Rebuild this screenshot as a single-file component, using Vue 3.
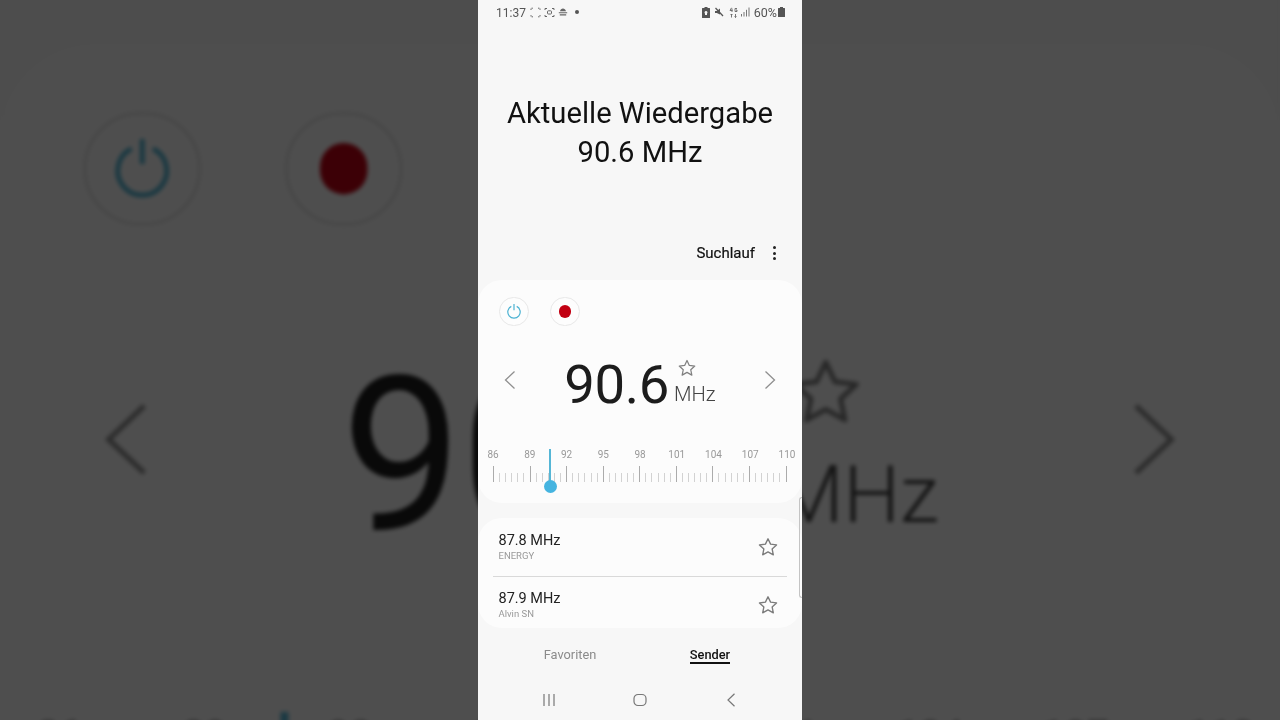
<script setup>
const layers = ['backdrop', 'front']
const labels = [86, 89, 92, 95, 98, 101, 104, 107, 110]
const ticks = Array.from({ length: 49 }, (_, i) => i)
const stations = [
  { freq: '87.8 MHz', name: 'ENERGY' },
  { freq: '87.9 MHz', name: 'Alvin SN' }
]
</script>

<template>
  <div class="stage">
    <div v-for="layer in layers" :key="layer" class="phone" :class="layer">
      <div class="status">
        <span class="time">11:37</span>
        <svg class="si" width="11" height="11" viewBox="0 0 11 11" fill="none" stroke="#666" stroke-width="1">
          <path d="M1 3V1.2H3M8 1.2h2V3M10 8v1.8H8M3 9.8H1V8" stroke-dasharray="1.4 .9" />
        </svg>
        <svg class="si gap3" width="11" height="11" viewBox="0 0 11 11" fill="none" stroke="#666" stroke-width="1">
          <path d="M1 3V1.5H3M8 1.5h2V3M10 8v1.5H8M3 9.5H1V8" />
          <rect x="3.5" y="3.8" width="4" height="3.2" rx=".8" />
        </svg>
        <svg class="si gap3" width="10" height="10" viewBox="0 0 10 10" fill="#666">
          <path d="M2 4.2C2.4 2.4 3.6 1.5 5 1.5c1.300 0 2.500.9 3 2.700zM.8 5.200h8.400v1.100H.8zM1.800 7.300h6.400v1.100H1.800z" />
        </svg>
        <span class="dot"></span>
        <span class="spacer"></span>
        <svg class="si" width="8" height="11" viewBox="0 0 8 11" fill="#555">
          <path d="M2.500 0h3v1H7.500a.5.5 0 0 1 .5.500V10.500a.5.5 0 0 1-.5.500H.5a.5.5 0 0 1-.5-.500V1.500A.5.5 0 0 1 .5 1h2zM4 4a1.500 1.500 0 0 0-1 2.600V8h2V6.600A1.500 1.500 0 0 0 4 4z" />
        </svg>
        <svg class="si gap4" width="10" height="10" viewBox="0 0 10 10" fill="#555">
          <path d="M1 4h1.800L6 1.500v6L2.800 6H1z" />
          <path d="M1.500 1l7.500 8" stroke="#555" stroke-width="1.200" />
        </svg>
        <svg class="si gap5" width="9" height="11" viewBox="0 0 9 11" fill="none" stroke="#666" stroke-width=".9">
          <path d="M2.500 .8L1 3.500h2.500M3 1.500v3.500M8 1.500H6v3h2V3H7" />
          <path d="M2.500 7v3.500M1.500 8l1-1 1 1M6.500 10.500V7M5.500 9.500l1 1 1-1" />
        </svg>
        <svg class="si gap3" width="10" height="10" viewBox="0 0 10 10" fill="#777">
          <rect x="0" y="7" width="1" height="2.500" />
          <rect x="2.500" y="5" width="1" height="4.500" />
          <rect x="5" y="2.800" width="1" height="6.700" />
          <rect x="7.500" y=".5" width="1" height="9" />
        </svg>
        <span class="pct">60%</span>
        <svg class="si" width="7" height="10" viewBox="0 0 7 10" fill="#555">
          <path d="M2 0h3v1h1.500a.5.5 0 0 1 .5.500V9.500a.5.5 0 0 1-.5.500H.5A.5.5 0 0 1 0 9.500V1.500A.5.5 0 0 1 .5 1H2z" />
        </svg>
      </div>

      <div class="hero">
        <div>Aktuelle Wiedergabe</div>
        <div>90.6 MHz</div>
      </div>

      <div class="actions">
        <span class="scan">Suchlauf</span>
        <span class="kebab"><i></i><i></i><i></i></span>
      </div>

      <section class="card tuner">
        <div class="controls">
          <div class="round">
            <svg width="16" height="16" viewBox="0 0 16 16" fill="none" stroke="#4cb2d2" stroke-width="1.200">
              <path d="M5.300 3.400a6.200 6.200 0 1 0 5.400 0" />
              <path d="M8 1v6.300" />
            </svg>
          </div>
          <div class="round"><span class="rec"></span></div>
        </div>

        <div class="freq-row">
          <svg class="chev" width="12" height="20" viewBox="0 0 12 20" fill="none" stroke="#8f8f8f" stroke-width="1.300">
            <path d="M10.500 1.500L1.500 10l9 8.500" />
          </svg>
          <div class="freq">
            <span class="num">90.6</span>
            <div class="unit">
              <svg class="fav" width="20" height="20" viewBox="0 0 24 24" fill="none" stroke="#808080" stroke-width="1.500" stroke-linejoin="round">
                <polygon points="12,3 14.800,8.900 21.300,9.700 16.500,14.100 17.800,20.500 12,17.300 6.200,20.500 7.500,14.100 2.700,9.700 9.200,8.900" />
              </svg>
              <span class="mhz">MHz</span>
            </div>
          </div>
          <svg class="chev" width="12" height="20" viewBox="0 0 12 20" fill="none" stroke="#8f8f8f" stroke-width="1.300">
            <path d="M1.500 1.500l9 8.500-9 8.500" />
          </svg>
        </div>

        <div class="dial">
          <div class="labels">
            <span v-for="l in labels" :key="l" class="lab"><b>{{ l }}</b></span>
          </div>
          <div class="ticks">
            <i v-for="t in ticks" :key="t" :class="{ major: t % 6 === 0 }"></i>
          </div>
          <span class="needle"></span>
          <span class="knob"></span>
        </div>
      </section>

      <section class="card list">
        <div v-for="s in stations" :key="s.freq" class="station">
          <div class="st-text">
            <div class="st-freq">{{ s.freq }}</div>
            <div class="st-name">{{ s.name }}</div>
          </div>
          <svg width="22" height="22" viewBox="0 0 24 24" fill="none" stroke="#7c7c7c" stroke-width="1.500" stroke-linejoin="round">
            <polygon points="12,3 14.800,8.900 21.300,9.700 16.500,14.100 17.800,20.500 12,17.300 6.200,20.500 7.500,14.100 2.700,9.700 9.200,8.900" />
          </svg>
        </div>
      </section>

      <nav class="tabs">
        <span class="tab">Favoriten</span>
        <span class="tab on">Sender</span>
      </nav>

      <div class="sysnav">
        <svg width="14" height="14" viewBox="0 0 14 14" stroke="#777" stroke-width="1.200">
          <path d="M2 1v12M7 1v12M12 1v12" />
        </svg>
        <svg width="14" height="14" viewBox="0 0 14 14" fill="none" stroke="#777" stroke-width="1.200">
          <rect x="1" y="1.500" width="12" height="11" rx="4" />
        </svg>
        <svg width="14" height="14" viewBox="0 0 14 14" fill="none" stroke="#777" stroke-width="1.200">
          <path d="M10.500 .8L4 7l6.500 6.200" />
        </svg>
      </div>

      <span class="scrollbar"></span>
    </div>
  </div>
</template>

<style>
html, body { margin: 0; background: #4e4e4e; }
</style>

<style scoped>
.stage {
  position: relative;
  width: 1280px;
  height: 720px;
  overflow: hidden;
  background: #4e4e4e;
  font-family: Roboto, "Liberation Sans", sans-serif;
}
.phone {
  position: absolute;
  top: 0;
  width: 324px;
  height: 720px;
  display: flex;
  flex-direction: column;
  background: #f7f7f7;
  color: #111;
}
.backdrop {
  left: 0;
  transform-origin: 0 0;
  transform: translateY(-1062px) scale(3.951);
  filter: blur(.55px) brightness(.31);
}
.front { left: 478px; filter: blur(.25px); }

.status {
  height: 24px;
  flex: none;
  display: flex;
  align-items: center;
  padding: 0 17px 0 18px;
  font-size: 12.500px;
  color: #555;
}
.time { margin-right: 4px; font-size: 12px; line-height: 14px; padding-top: 1px; }
.si { flex: none; }
.gap3 { margin-left: 3px; }
.gap4 { margin-left: 4px; }
.gap5 { margin-left: 5px; }
.dot {
  width: 4px;
  height: 4px;
  border-radius: 50%;
  background: #555;
  margin-left: 7px;
}
.spacer { flex: 1; }
.pct { margin-left: 3px; margin-right: 1px; }

.hero {
  height: 214px;
  flex: none;
  box-sizing: border-box;
  padding-top: 4px;
  display: flex;
  flex-direction: column;
  justify-content: center;
  align-items: center;
  font-size: 29.200px;
  line-height: 39.500px;
  color: #111;
}
.actions {
  height: 30px;
  flex: none;
  display: flex;
  align-items: center;
  justify-content: flex-end;
  padding-right: 26px;
  margin-bottom: 12px;
}
.scan { font-size: 15px; font-weight: 400; margin-right: 18px; -webkit-text-stroke: .2px #111; }
.kebab { display: flex; flex-direction: column; gap: 2.500px; }
.kebab i { width: 3px; height: 3px; border-radius: 50%; background: #222; }

.card { background: #fcfcfc; border-radius: 24px; flex: none; }
.tuner { height: 223px; box-sizing: border-box; padding-top: 16.500px; position: relative; }
.controls { display: flex; gap: 21.500px; padding-left: 21px; }
.round {
  width: 29.500px;
  height: 29.500px;
  box-sizing: border-box;
  border: 1px solid #e8e8e8;
  border-radius: 50%;
  display: flex;
  align-items: center;
  justify-content: center;
  background: #fdfdfd;
}
.rec { width: 12.500px; height: 12.500px; border-radius: 50%; background: #c20012; }

.freq-row {
  display: flex;
  align-items: center;
  justify-content: space-between;
  padding: 0 26px;
  height: 70px;
  margin-top: 21.500px;
  box-sizing: border-box;
}
.chev { margin-top: -6px; }
.freq { display: flex; align-items: flex-end; }
.num {
  font-size: 54.500px;
  line-height: 70px;
  letter-spacing: -.4px;
  color: #1c1c1c;
  position: relative;
  top: 1px;
}
.unit {
  display: flex;
  flex-direction: column;
  margin-left: 5px;
  padding-bottom: 13px;
}
.fav { margin-left: 3px; }
.mhz { font-size: 20.200px; font-weight: 300; line-height: 22px; color: #444; margin-top: 5px; }

.dial { position: relative; margin-top: 30px; padding: 0 15px; }
.labels { display: flex; justify-content: space-between; height: 12px; padding-top: 1px; }
.lab { width: 0; display: flex; justify-content: center; }
.lab b { font-weight: 400; font-size: 10px; line-height: 12px; color: #999; }
.ticks {
  display: flex;
  justify-content: space-between;
  align-items: flex-end;
  height: 16px;
  margin-top: 5px;
}
.ticks i { width: 1px; height: 9px; background: #d2d2d2; }
.ticks i.major { height: 16px; background: #ababab; }
.needle {
  position: absolute;
  left: 71px;
  top: 1px;
  width: 2px;
  height: 38px;
  background: #55b6d6;
}
.knob {
  position: absolute;
  left: 65.500px;
  top: 32.500px;
  width: 13px;
  height: 13px;
  border-radius: 50%;
  background: #45b4e0;
}

.list { height: 110px; margin-top: 15px; overflow: hidden; padding: 0 15px; box-sizing: border-box; }
.station {
  height: 59px;
  box-sizing: border-box;
  display: flex;
  align-items: center;
  justify-content: space-between;
  padding: 0 8px 0 5.500px;
  border-bottom: 1px solid #d9d9d9;
}
.station:last-child { border-bottom: 0; height: 56px; }
.st-text { align-self: flex-start; padding-top: 13.500px; }
.station:last-child .st-text { padding-top: 12.500px; }
.st-freq { font-size: 14.500px; line-height: 18px; color: #222; }
.st-name { font-size: 9.500px; line-height: 12px; color: #999; margin-top: .5px; }

.tabs { height: 52px; flex: none; position: relative; display: grid; grid-template-columns: 1fr 1fr; padding: 0 22px; align-items: center; justify-items: center; }
.tab { font-size: 12.800px; line-height: 18px; color: #8b8b8b; margin-top: 2px; }
.tab.on {
  color: #111;
  font-weight: 500;
  border-bottom: 2px solid #111;
  line-height: 15px;
}

.sysnav {
  flex: 1;
  display: flex;
  align-items: center;
  justify-content: space-between;
  padding: 0 64px;
  margin-top: -1px;
}

.scrollbar {
  position: absolute;
  right: 0;
  top: 497px;
  width: 3px;
  height: 101px;
  box-sizing: border-box;
  border: 1px solid #c4c4c4;
  border-right: 0;
  border-radius: 3px 0 0 3px;
}
</style>
